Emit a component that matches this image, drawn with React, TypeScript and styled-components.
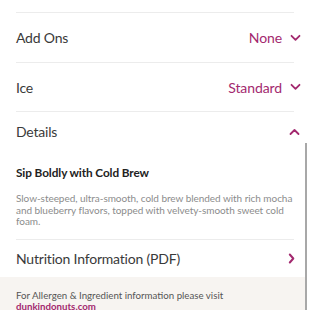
import React from "react";
import styled, { createGlobalStyle } from "styled-components";

const Global = createGlobalStyle`
  html, body { margin: 0; padding: 0; background: #ffffff; }
  body { font-family: "Lato", "Noto Sans", sans-serif; overflow: hidden; }
`;

const PINK = "#a3296f";

const Page = styled.div`
  position: relative;
  width: 310px;
  height: 310px;
  overflow: hidden;
  background: #fff;
`;

const Panel = styled.div`
  width: 305px;
  padding-top: 12px;
`;

const List = styled.div`
  padding: 0 11px 0 16px;
`;

const Row = styled.div<{ $h: number }>`
  height: ${(p) => p.$h}px;
  display: flex;
  align-items: center;
  justify-content: space-between;
  border-top: 1px solid #ececec;
  box-sizing: border-box;
`;

const Label = styled.span`
  font-size: 14px;
  color: #3a3a3a;
  letter-spacing: -0.2px;
`;

const Value = styled.span`
  display: flex;
  align-items: center;
  gap: 8px;
  font-size: 14px;
  letter-spacing: -0.1px;
  color: ${PINK};
  margin-right: -7px;
`;

const IconWrap = styled.span<{ $mr?: number }>`
  display: flex;
  align-items: center;
  margin-right: ${(p) => p.$mr ?? 0}px;
`;

const Details = styled.div`
  padding: 14px 0 11px;
`;

const Title = styled.div`
  font-size: 11.8px;
  font-weight: 700;
  color: #222;
  line-height: 16px;
  letter-spacing: -0.1px;
  margin-bottom: 12px;
`;

const Desc = styled.div`
  font-size: 10px;
  color: #8c8c8c;
  line-height: 11.6px;
  letter-spacing: -0.05px;
`;

const Footer = styled.div`
  background: #f7f4f1;
  padding: 13px 16px 0;
  height: 60px;
`;

const FooterText = styled.div`
  font-size: 9.7px;
  color: #555;
  line-height: 11.5px;
`;

const Link = styled.a`
  color: ${PINK};
  font-weight: 700;
  text-decoration: none;
  display: block;
`;

const Scrollbar = styled.div`
  position: absolute;
  left: 305px;
  top: 143px;
  width: 2px;
  height: 170px;
  background: #a8a8a8;
`;

const ChevDown = () => (
  <svg width="11" height="8" viewBox="0 0 11 8">
    <path d="M1.5 1.8 L5.5 5.8 L9.5 1.8" fill="none" stroke={PINK} strokeWidth="1.8" strokeLinecap="round" strokeLinejoin="round" />
  </svg>
);

const ChevUp = () => (
  <svg width="11" height="8" viewBox="0 0 11 8">
    <path d="M1.5 6 L5.5 2 L9.5 6" fill="none" stroke={PINK} strokeWidth="1.8" strokeLinecap="round" strokeLinejoin="round" />
  </svg>
);

const ChevRight = () => (
  <svg width="7" height="11" viewBox="0 0 7 11">
    <path d="M1.8 1.5 L5.3 5.5 L1.8 9.5" fill="none" stroke={PINK} strokeWidth="2" strokeLinecap="round" strokeLinejoin="round" />
  </svg>
);

export default function App() {
  return (
    <Page>
      <Global />
      <Panel>
        <List>
          <Row $h={50}>
            <Label>Add Ons</Label>
            <Value>
              None <ChevDown />
            </Value>
          </Row>
          <Row $h={49}>
            <Label>Ice</Label>
            <Value>
              Standard <ChevDown />
            </Value>
          </Row>
          <Row $h={40}>
            <Label>Details</Label>
            <IconWrap $mr={-6}>
              <ChevUp />
            </IconWrap>
          </Row>
          <Details>
            <Title>Sip Boldly with Cold Brew</Title>
            <Desc>
              Slow-steeped, ultra-smooth, cold brew blended with rich mocha and blueberry flavors, topped with velvety-smooth sweet cold foam.
            </Desc>
          </Details>
          <Row $h={38}>
            <Label>Nutrition Information (PDF)</Label>
            <IconWrap $mr={-1}>
              <ChevRight />
            </IconWrap>
          </Row>
        </List>
        <Footer>
          <FooterText>
            For Allergen &amp; Ingredient information please visit
            <Link href="#">dunkindonuts.com</Link>
          </FooterText>
        </Footer>
      </Panel>
      <Scrollbar />
    </Page>
  );
}
